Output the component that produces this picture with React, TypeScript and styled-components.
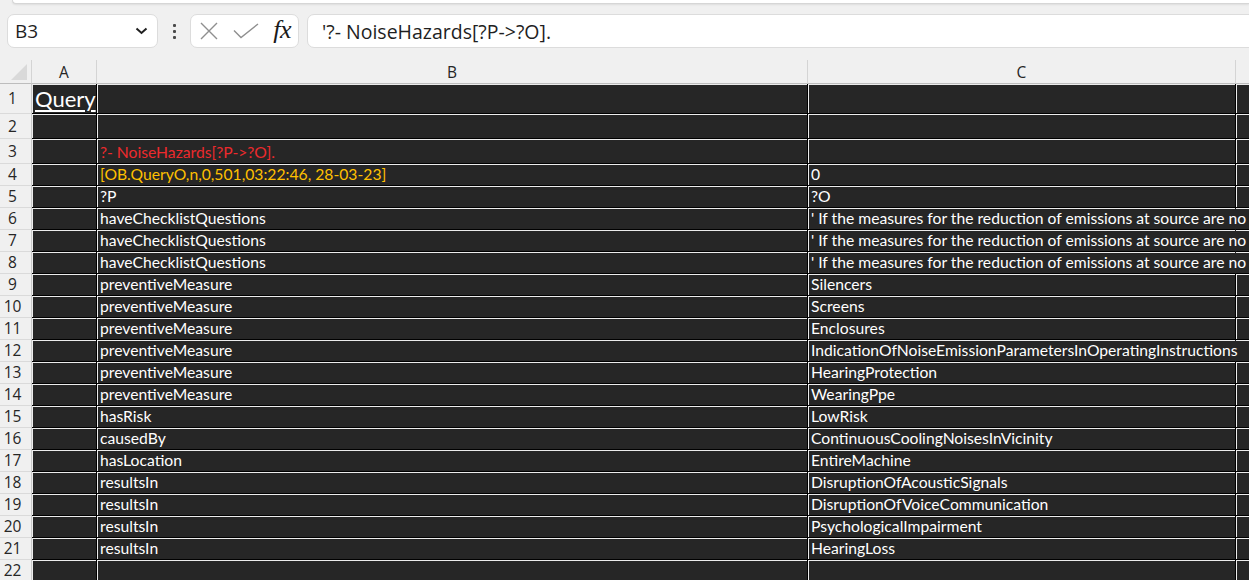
import React from 'react';
import styled, { createGlobalStyle } from 'styled-components';

const GlobalStyle = createGlobalStyle`
    html, body {
        margin: 0;
        padding: 0;
        background: #f0f0f0;
        overflow: hidden;
    }
    * {
        box-sizing: border-box;
    }
`;

type Row = {
    num: number;
    a?: string;
    b?: string;
    c?: string;
    tone?: 'red' | 'gold';
    spill?: boolean;
};

// only the part that shows before the window edge
const QUESTION = "' If the measures for the reduction of emissions at source are no";

const rows: Row[] = [
    { num: 1, a: 'Query' },
    { num: 2 },
    { num: 3, b: '?- NoiseHazards[?P->?O].', tone: 'red' },
    { num: 4, b: '[OB.QueryO,n,0,501,03:22:46, 28-03-23]', c: '0', tone: 'gold' },
    { num: 5, b: '?P', c: '?O' },
    { num: 6, b: 'haveChecklistQuestions', c: QUESTION, spill: true },
    { num: 7, b: 'haveChecklistQuestions', c: QUESTION, spill: true },
    { num: 8, b: 'haveChecklistQuestions', c: QUESTION, spill: true },
    { num: 9, b: 'preventiveMeasure', c: 'Silencers' },
    { num: 10, b: 'preventiveMeasure', c: 'Screens' },
    { num: 11, b: 'preventiveMeasure', c: 'Enclosures' },
    { num: 12, b: 'preventiveMeasure', c: 'IndicationOfNoiseEmissionParametersInOperatingInstructions', spill: true },
    { num: 13, b: 'preventiveMeasure', c: 'HearingProtection' },
    { num: 14, b: 'preventiveMeasure', c: 'WearingPpe' },
    { num: 15, b: 'hasRisk', c: 'LowRisk' },
    { num: 16, b: 'causedBy', c: 'ContinuousCoolingNoisesInVicinity' },
    { num: 17, b: 'hasLocation', c: 'EntireMachine' },
    { num: 18, b: 'resultsIn', c: 'DisruptionOfAcousticSignals' },
    { num: 19, b: 'resultsIn', c: 'DisruptionOfVoiceCommunication' },
    { num: 20, b: 'resultsIn', c: 'PsychologicalImpairment' },
    { num: 21, b: 'resultsIn', c: 'HearingLoss' },
    { num: 22 },
];

const rowHeight = (num: number) => (num === 1 ? 30 : num <= 3 ? 25 : 22);

export default function App(): JSX.Element {
    return (
        <>
            <GlobalStyle />
            <RibbonEdge />
            <FormulaBar>
                <NameBox>
                    <span>B3</span>
                    <svg width="13" height="8" viewBox="0 0 13 8">
                        <polyline points="1.5,1.5 6.5,6 11.5,1.5" fill="none" stroke="#1f1f1f" strokeWidth="2" />
                    </svg>
                </NameBox>
                <Grip>
                    <i />
                    <i />
                    <i />
                </Grip>
                <FxBox>
                    <svg width="18" height="18" viewBox="0 0 18 18">
                        <path d="M1 1 L17 17 M17 1 L1 17" stroke="#8f8f8f" strokeWidth="1.4" fill="none" />
                    </svg>
                    <svg width="26" height="16" viewBox="0 0 26 16">
                        <polyline points="1,7.5 8,14.5 25,1" fill="none" stroke="#8f8f8f" strokeWidth="1.4" />
                    </svg>
                    <FxLabel>fx</FxLabel>
                </FxBox>
                <FormulaInput>'?- NoiseHazards[?P-&gt;?O].</FormulaInput>
            </FormulaBar>

            <Sheet>
                <Corner>
                    <svg width="16" height="16" viewBox="0 0 16 16">
                        <polygon points="16,0 16,16 0,16" fill="#d9d9d9" />
                    </svg>
                </Corner>
                <ColHeader>A</ColHeader>
                <ColHeader>B</ColHeader>
                <ColHeader>C</ColHeader>
                <ColHeader />

                {rows.map((r) => (
                    <React.Fragment key={r.num}>
                        <RowHeader $h={rowHeight(r.num)}>{r.num}</RowHeader>
                        <Cell $h={rowHeight(r.num)}>{r.a && <Title>{r.a}</Title>}</Cell>
                        <Cell $h={rowHeight(r.num)} $tone={r.tone}>
                            {r.b}
                        </Cell>
                        <Cell $h={rowHeight(r.num)} $spill={r.spill}>
                            {r.c && <Spill>{r.c}</Spill>}
                        </Cell>
                        <Cell $h={rowHeight(r.num)} $joined={r.spill} />
                    </React.Fragment>
                ))}
            </Sheet>
        </>
    );
}

const RibbonEdge = styled.div`
    height: 4px;
    margin-left: 12px;
    background: #ffffff;
    border-bottom: 1px solid #d6d6d6;
    border-left: 1px solid #d6d6d6;
    border-bottom-left-radius: 8px;
    box-shadow: 0 1px 2px rgba(0, 0, 0, 0.08);
`;

const FormulaBar = styled.div`
    display: flex;
    align-items: center;
    height: 34px;
    margin-top: 10px;
    padding-left: 7px;
    font-family: 'Open Sans', 'Noto Sans', sans-serif;
    color: #1f1f1f;
`;

const Field = styled.div`
    height: 34px;
    background: #ffffff;
    border: 1px solid #dcdcdc;
    border-radius: 7px;
    display: flex;
    align-items: center;
`;

const NameBox = styled(Field)`
    width: 151px;
    padding: 0 9px 0 7px;
    justify-content: space-between;
    font-size: 19px;
`;

const Grip = styled.div`
    width: 32px;
    display: flex;
    flex-direction: column;
    align-items: center;
    gap: 3px;

    i {
        display: block;
        width: 3px;
        height: 3px;
        border-radius: 1px;
        background: #4a4a4a;
    }
`;

const FxBox = styled(Field)`
    width: 109px;
    padding: 0 7px 0 9px;
    justify-content: space-between;
`;

const FxLabel = styled.span`
    font-family: 'Liberation Serif', 'DejaVu Serif', serif;
    font-style: italic;
    font-size: 26px;
    line-height: 1;
    margin-top: -3px;
    letter-spacing: -0.5px;
    color: #1a1a1a;
`;

const FormulaInput = styled(Field)`
    flex: 1;
    margin-left: 8px;
    margin-right: -20px;
    padding-left: 14px;
    font-size: 19.5px;
    white-space: nowrap;
`;

const Sheet = styled.div`
    margin-top: 12px;
    display: grid;
    grid-template-columns: 32px 65px 711px 428px 200px;
    width: 1436px;
    font-family: 'Lato', 'Liberation Sans', sans-serif;
`;

const Corner = styled.div`
    height: 24px;
    background: #f0f0f0;
    border-bottom: 1px solid #bdbdbd;
    border-right: 1px solid #d4d4d4;
    display: flex;
    align-items: flex-end;
    justify-content: flex-end;
    padding: 0 4px 3px 0;
`;

const ColHeader = styled.div`
    height: 24px;
    background: #f0f0f0;
    border-bottom: 1px solid #bdbdbd;
    border-right: 1px solid #d4d4d4;
    display: flex;
    align-items: center;
    justify-content: center;
    font-family: 'Open Sans', 'Noto Sans', sans-serif;
    font-size: 15.5px;
    color: #262626;
`;

const RowHeader = styled.div<{ $h: number }>`
    height: ${(p) => p.$h}px;
    background: #f0f0f0;
    border-bottom: 1px solid #dadada;
    border-right: 1px solid #c8c8c8;
    padding: 0 6px 1px 0;
    display: flex;
    align-items: center;
    justify-content: center;
    font-family: 'Open Sans', 'Noto Sans', sans-serif;
    font-size: 15.5px;
    color: #262626;
`;

const toneColor = { red: '#ec2a2d', gold: '#ffc000' };

const Cell = styled.div<{ $h: number; $tone?: 'red' | 'gold'; $spill?: boolean; $joined?: boolean }>`
    position: relative;
    height: ${(p) => p.$h}px;
    background: #262626;
    border-bottom: 1px solid #000000;
    border-right: ${(p) => (p.$spill ? '1px solid #262626' : '1px solid #000000')};
    box-shadow: inset 0 1px 0 #ececec ${(p) => (p.$joined ? '' : ', inset 1px 0 0 #ececec')};
    padding: 0 0 1px 3px;
    display: flex;
    align-items: flex-end;
    white-space: nowrap;
    font-size: 15.7px;
    line-height: 19px;
    color: ${(p) => (p.$tone ? toneColor[p.$tone] : '#ffffff')};
    overflow: ${(p) => (p.$spill ? 'visible' : 'hidden')};
    z-index: ${(p) => (p.$spill ? 1 : 0)};
`;

const Spill = styled.span`
    position: relative;
    z-index: 2;
`;

const Title = styled.span`
    font-size: 22px;
    line-height: 27px;
    text-decoration: underline;
    text-underline-offset: 3px;
`;
